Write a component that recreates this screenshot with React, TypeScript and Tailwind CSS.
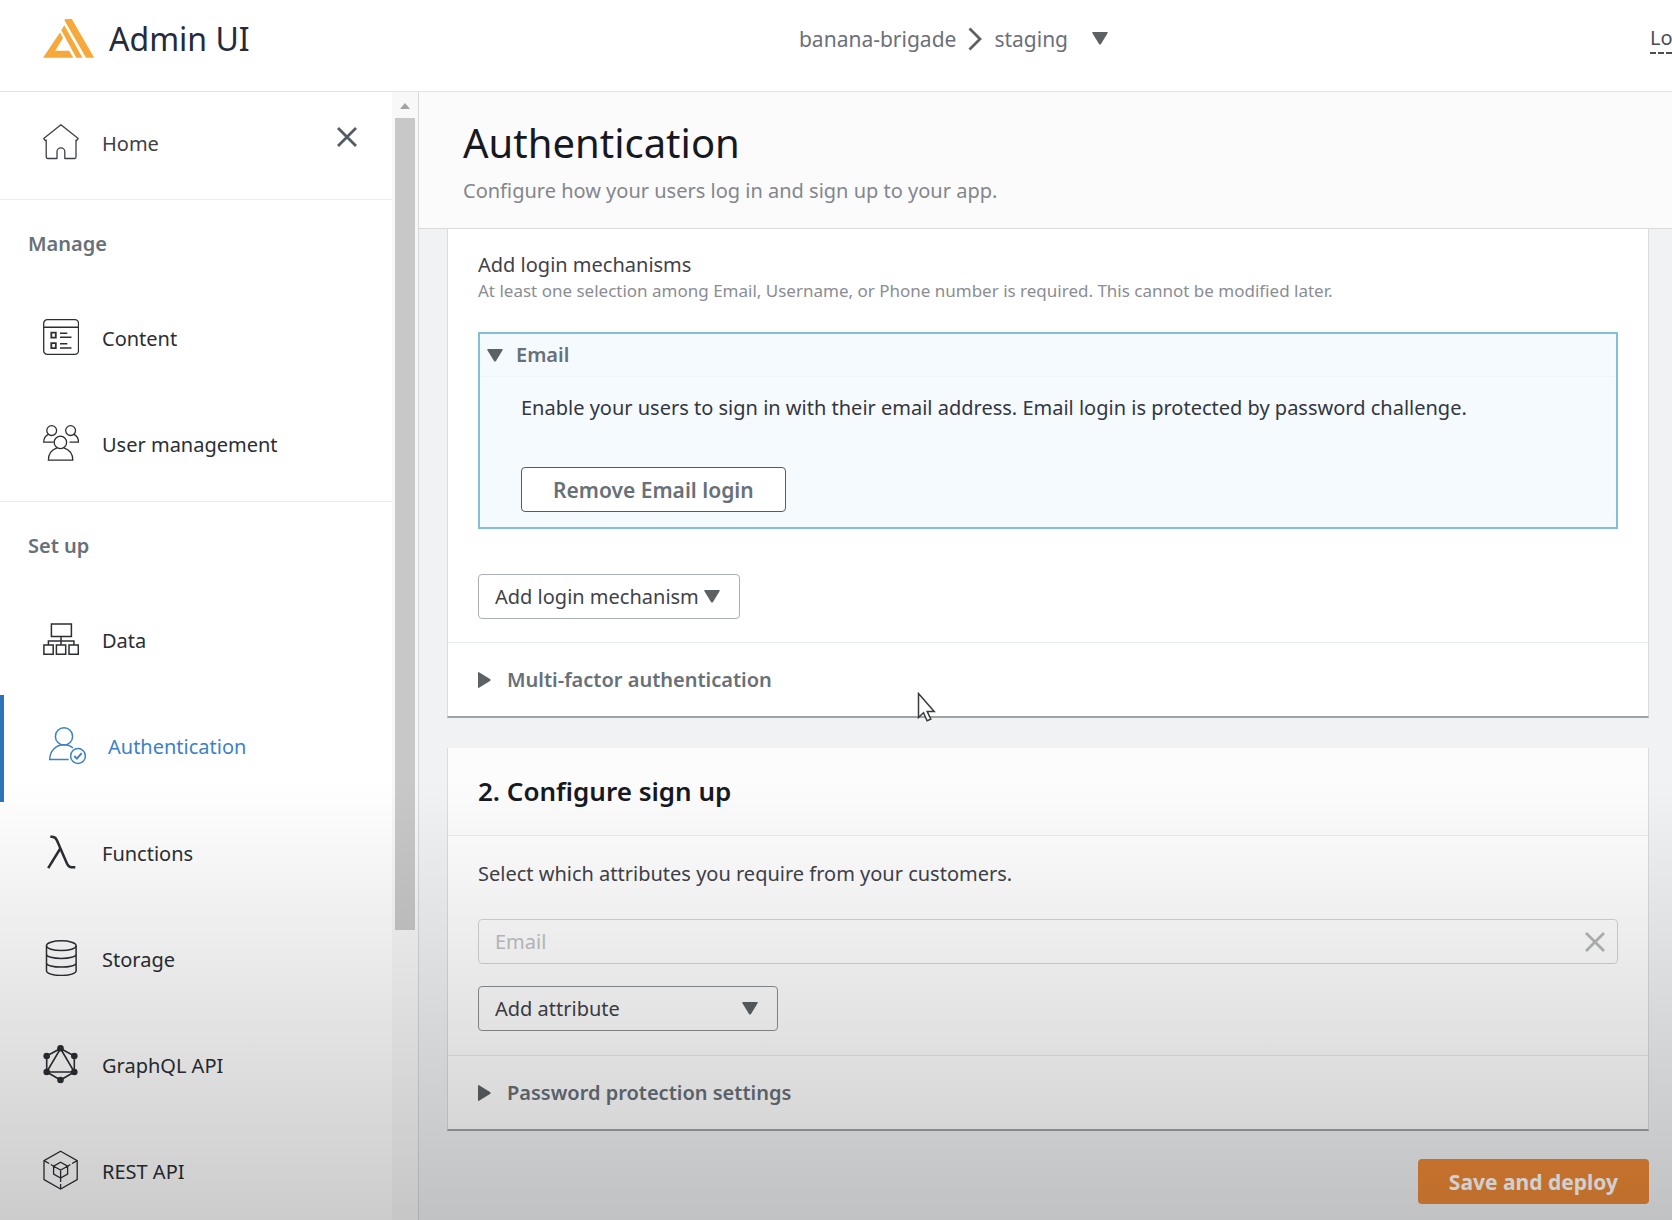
import type { ReactNode } from "react";

const iconProps = {
  viewBox: "0 0 36 36",
  className: "h-9 w-9 shrink-0",
  fill: "none",
  stroke: "currentColor",
  strokeWidth: 1.3,
  "aria-hidden": true,
} as const;

function HomeIcon() {
  return (
    <svg {...iconProps} strokeLinejoin="round">
      <path d="M.7 14.6 17.9.8 35.2 14.6l-1.6 1.9-.6-.4v17a1.4 1.4 0 0 1-1.4 1.4H21.8v-6.7a3.9 3.9 0 0 0-7.8 0v6.7H4.6a1.4 1.4 0 0 1-1.4-1.4v-17l-.9.5z" />
    </svg>
  );
}

function ContentIcon() {
  return (
    <svg {...iconProps}>
      <rect x=".7" y=".7" width="34.8" height="34.6" rx="3.6" />
      <path d="M.7 8.3h34.8M17 14.3h7.3M17 18.2h11.5M17 24.7h7.3M17 29h11.5" strokeWidth="1.5" />
      <path d="M8.3 13.7h4.5v5H8.3zM8.3 24.2h4.5v5H8.3z" strokeWidth="1.8" />
    </svg>
  );
}

function UsersIcon() {
  return (
    <svg {...iconProps}>
      <circle cx="8.7" cy="5.6" r="4.9" />
      <circle cx="27.6" cy="5.6" r="4.9" />
      <path d="M5.4 9.3C2.3 10.7.7 13.5.7 17.2h10M30.8 9.3c3.1 1.4 4.7 4.2 4.7 7.9h-9" />
      <circle cx="17.4" cy="17.4" r="6.2" />
      <path d="M14 22.9c-5.2 1.8-8.6 6.100-8.6 12.200h24.400c0-6.100-3.800-10.500-9-12.200" />
    </svg>
  );
}

function DataIcon() {
  return (
    <svg {...iconProps} strokeWidth="1.5">
      <path d="M8.4 3h20v12.400h-20zM.9 24h9.300v9.300H.9zM13.400 24h9.300v9.300h-9.300zM26 24h9.300v9.300H26zM5.400 24v-4h25.500v4M18 15.400V24" />
    </svg>
  );
}

function AuthIcon() {
  return (
    <svg {...iconProps} className="h-9 w-9 shrink-0 overflow-visible" strokeWidth="1.5">
      <circle cx="15" cy="8.4" r="8.6" />
      <path d="M24 20c-2.600-2.300-5.600-3.200-9-3.200C6.800 16.800.7 23.200.7 31.600h19" />
      <circle cx="29" cy="28" r="7.4" />
      <path d="m25.300 28 2.600 2.600 4.800-5.400" strokeWidth="2" />
    </svg>
  );
}

function LambdaIcon() {
  return (
    <svg {...iconProps} strokeWidth="2.5">
      <path d="M7.300 2.800h1.500c2.700 0 4 .8 5.200 3.600l9.600 22.400c1.300 3 2.500 4.500 5 4.500h3.700M17.300 14.500 5.200 34.200" />
    </svg>
  );
}

function StorageIcon() {
  return (
    <svg {...iconProps} strokeWidth="1.5">
      <ellipse cx="18.3" cy="5.7" rx="14.8" ry="4.9" />
      <path d="M3.500 5.700v25c0 2.700 6.600 4.800 14.800 4.800s14.800-2.100 14.800-4.800v-25M3.500 14.300c0 2.500 6.600 4.200 14.800 4.200s14.800-1.700 14.800-4.200M3.500 22.900c0 2.500 6.600 4.200 14.800 4.200s14.800-1.700 14.800-4.200" />
    </svg>
  );
}

function GraphqlIcon() {
  return (
    <svg {...iconProps} className="h-9 w-9 shrink-0 overflow-visible" strokeWidth="1.6">
      <path d="M17.500 2.500 31.300 10v16L17.500 34 3.700 26V10zM17.500 2.500 31.300 26H3.700z" />
      <g fill="currentColor" stroke="none">
        <circle cx="17.5" cy="2.2" r="3.3" />
        <circle cx="31.3" cy="10" r="3.3" />
        <circle cx="31.3" cy="26" r="3.3" />
        <circle cx="17.5" cy="34" r="3.3" />
        <circle cx="3.7" cy="26" r="3.3" />
        <circle cx="3.7" cy="10" r="3.3" />
      </g>
    </svg>
  );
}

function RestIcon() {
  return (
    <svg {...iconProps} className="h-9 w-9 shrink-0 overflow-visible">
      <path d="m17.600-.8 16.600 9.400v19L17.600 37 1 27.600v-19z" />
      <path d="m17.600 10.200 7 4v7.800l-7 4-7-4v-7.800zM10.600 14.200l7 3.900 7-3.900M17.600 18.100V26" />
      <path d="m1 8.600 5.200 2.900M7.800 12.500l2.800 1.700M34.200 8.600l-5.200 2.900M27.400 12.500l-2.800 1.700M17.600 37v-5M17.600 30v-4" />
    </svg>
  );
}

function Logo() {
  return (
    <svg viewBox="0 0 52 40" className="h-10 w-[52px] shrink-0" fill="#f6a83b" aria-hidden="true">
      <path d="M17 13.500 20 19 12.300 31.800H26.200L30.300 38.800H0z" />
      <path d="M18.300 11.200 21.300 6.200 39.500 38.800H33.300z" />
      <path d="M22.400 0h6.400l22.400 38.800h-8.200L21.500 1.500z" />
    </svg>
  );
}

function Cross({ className }: { className: string }) {
  return (
    <svg viewBox="0 0 20 20" className={className} fill="none" stroke="currentColor" strokeWidth="2.8" aria-hidden="true">
      <path d="m1 1 18 18M19 1 1 19" />
    </svg>
  );
}

function Down({ className = "" }: { className?: string }) {
  return (
    <svg viewBox="0 0 16 13" className={"h-[13px] w-4 shrink-0 " + className} fill="#5d6163" aria-hidden="true">
      <path d="M1 0h14q1.300 0 .7 1L9 12q-1 1.200-2 0L.3 1Q-.3 0 1 0" />
    </svg>
  );
}

function Right() {
  return (
    <svg viewBox="0 0 13 16" className="h-4 w-[13px] shrink-0" fill="#5d6163" aria-hidden="true">
      <path d="M0 1v14q0 1.300 1 .7L12 9q1.200-1 0-2L1 .3Q0-.3 0 1" />
    </svg>
  );
}

function NavItem({ icon, label, active = false }: { icon: ReactNode; label: string; active?: boolean }) {
  return (
    <a
      href="#"
      aria-current={active ? "page" : undefined}
      className={
        active
          ? "flex h-[107px] items-center gap-[23px] border-l-4 border-[#2e73b8] pb-1.5 pl-[45px] text-[#3d81c4]"
          : "flex h-[106px] items-center gap-[23px] pb-1.5 pl-[43px] text-[#2b2e33]"
      }
    >
      {icon}
      <span className="pt-[3px]">{label}</span>
    </a>
  );
}

function Sidebar() {
  return (
    <nav className="w-[392px] shrink-0 overflow-hidden bg-white">
      <div className="flex justify-between border-b border-[#ececec] pt-8 pr-[35px] pb-[39px]">
        <a href="#" className="flex items-center gap-[23px] pl-[43px] text-[#3d4046]">
          <HomeIcon />
          <span className="pt-[3px]">Home</span>
        </a>
        <button type="button" aria-label="Close navigation" className="h-[26px] text-[#545b64]">
          <Cross className="h-5 w-5" />
        </button>
      </div>
      <div className="border-b border-[#ececec] pb-0.5">
        <h2 className="px-7 pt-[30px] pb-[29px] leading-7 font-semibold text-[#687078]">Manage</h2>
        <NavItem icon={<ContentIcon />} label="Content" />
        <NavItem icon={<UsersIcon />} label="User management" />
      </div>
      <h2 className="px-7 pt-[30px] pb-[29px] leading-7 font-semibold text-[#687078]">Set up</h2>
      <NavItem icon={<DataIcon />} label="Data" />
      <NavItem icon={<AuthIcon />} label="Authentication" active />
      <NavItem icon={<LambdaIcon />} label="Functions" />
      <NavItem icon={<StorageIcon />} label="Storage" />
      <NavItem icon={<GraphqlIcon />} label="GraphQL API" />
      <NavItem icon={<RestIcon />} label="REST API" />
    </nav>
  );
}

function ScrollTrack() {
  return (
    <div className="flex w-[27px] shrink-0 flex-col border-r border-[#d5d9d9] bg-[#f8f8f8] pr-[3px] pl-[3px]">
      <svg viewBox="0 0 10 6" className="mx-auto mt-[11px] mb-[9px] h-1.5 w-2.5" fill="#a3a3a3" aria-hidden="true">
        <path d="M5 0l5 6H0z" />
      </svg>
      <div className="h-[72%] bg-[#c8c8c8]" />
    </div>
  );
}

const card = "border-x border-[#d9dcdd] border-b-2 border-b-[#9fa3a5] bg-white";

function LoginCard() {
  return (
    <section className={card}>
      <div className="px-[30px] pt-[22px] pb-[23px]">
        <h2 className="leading-7 text-[#3f4249]">Add login mechanisms</h2>
        <p className="text-[17px] leading-6 text-[#8a8d92]">
          At least one selection among Email, Username, or Phone number is required. This cannot be modified later.
        </p>
        <div className="mt-[29px] border-2 border-[#83c0d8] bg-[#f5faff]">
          <button
            type="button"
            aria-expanded="true"
            className="flex h-[43px] w-full items-center gap-[13px] border-b border-[#eff4f8] px-[7px] font-semibold text-[#687078]"
          >
            <Down />
            Email
          </button>
          <div className="px-[41px] pt-[17px] pb-[15px]">
            <p className="leading-7 text-[#33363d]">
              Enable your users to sign in with their email address. Email login is protected by password challenge.
            </p>
            <button
              type="button"
              className="mt-[45px] h-[45px] rounded-sm border border-[#545b64] bg-white px-[31px] text-[21px] font-semibold text-[#687078]"
            >
              Remove Email login
            </button>
          </div>
        </div>
        <div className="relative mt-[45px] w-[262px]">
          <select
            aria-label="Add login mechanism"
            className="block h-[45px] w-full appearance-none rounded-sm border border-[#aab0b5] bg-white pl-4 text-[#3f4249]"
          >
            <option>Add login mechanism</option>
          </select>
          <Down className="pointer-events-none absolute top-4 right-5" />
        </div>
      </div>
      <button
        type="button"
        aria-expanded="false"
        className="flex h-[74px] w-full items-center gap-4 border-t border-[#eaeded] px-[30px] font-semibold text-[#687078]"
      >
        <Right />
        Multi-factor authentication
      </button>
    </section>
  );
}

function SignUpCard() {
  return (
    <section className={card}>
      <h2 className="border-b border-[#eaeded] bg-[#fcfcfd] px-[30px] pt-[25px] pb-[26px] text-[26px] leading-9 font-semibold text-[#16191f]">
        2. Configure sign up
      </h2>
      <div className="px-[30px] pt-6 pb-6">
        <p className="leading-7 text-[#3f4249]">Select which attributes you require from your customers.</p>
        <div className="mt-[31px] flex h-[45px] items-center rounded-sm border border-[#d5d5d5] pr-3 pl-4 text-[#bfc1c3]">
          <input
            aria-label="Required attribute"
            value="Email"
            readOnly
            className="min-w-0 flex-1 bg-transparent outline-none"
          />
          <button type="button" aria-label="Remove Email" className="text-[#b5b7b8]">
            <Cross className="h-5 w-5" />
          </button>
        </div>
        <div className="relative mt-[22px] w-[300px]">
          <select
            aria-label="Add attribute"
            className="block h-[45px] w-full appearance-none rounded-sm border border-[#8b9095] bg-transparent pl-4 text-[#3f4249]"
          >
            <option>Add attribute</option>
          </select>
          <Down className="pointer-events-none absolute top-4 right-5" />
        </div>
      </div>
      <button
        type="button"
        aria-expanded="false"
        className="flex h-[74px] w-full items-center gap-4 border-t border-[#eaeded] px-[30px] font-semibold text-[#687078]"
      >
        <Right />
        Password protection settings
      </button>
    </section>
  );
}

export default function App() {
  return (
    <div className="relative flex h-screen flex-col overflow-hidden bg-white font-['Noto_Sans',sans-serif] text-[20px] leading-7">
      <header className="flex h-[92px] shrink-0 items-center justify-between border-b border-[#e4e4e4] pb-[14px] pl-[43px]">
        <div className="flex flex-[4] items-center gap-[14px]">
          <Logo />
          <span className="text-[32px] leading-10 text-[#252b3a]">Admin UI</span>
        </div>
        <button type="button" className="flex items-center pl-1 text-[21px] text-[#6b7078]">
          <span>banana-brigade</span>
          <svg viewBox="0 0 14 24" className="mx-3 h-6 w-3.5" fill="none" stroke="#5d6163" strokeWidth="2.8" aria-hidden="true">
            <path d="m1.500 1.500 10.500 10.500L1.500 22.500" />
          </svg>
          <span>staging</span>
          <Down className="ml-6" />
        </button>
        <div className="flex flex-[3] justify-end">
          <a href="#" className="w-[22px] overflow-hidden border-b-2 border-dashed border-[#4a4d52] whitespace-nowrap text-[#4a4d52]">
            Log out
          </a>
        </div>
      </header>

      <div className="flex min-h-0 flex-1">
        <Sidebar />
        <ScrollTrack />
        <main className="flex min-w-0 flex-1 flex-col bg-[#f0f2f4]">
          <div className="border-b border-[#d9dbdd] bg-[#fbfbfb] px-11 pt-[25px] pb-[23px]">
            <h1 className="text-[40px] leading-[52px] text-[#16191f]">Authentication</h1>
            <p className="pt-2 leading-7 text-[#83868c]">Configure how your users log in and sign up to your app.</p>
          </div>
          <div className="flex flex-col pr-[23px] pl-7">
            <LoginCard />
            <div className="pt-[30px]">
              <SignUpCard />
            </div>
            <button
              type="button"
              className="mt-7 h-[45px] self-end rounded-sm bg-[#ed8936] px-[31px] text-[21px] font-bold text-white"
            >
              Save and deploy
            </button>
          </div>
        </main>
      </div>

      <div className="pointer-events-none absolute inset-x-0 bottom-0 h-[440px] bg-linear-to-b from-transparent to-black/20" />
      <svg
        viewBox="0 0 20 32"
        className="pointer-events-none absolute top-[692px] left-[917px] h-8 w-5"
        fill="#fff"
        stroke="#3a3a3a"
        strokeWidth="1.5"
        aria-hidden="true"
      >
        <path d="M1.500 1.500v24l5-4.700 3.600 8 3.700-1.700-3.600-7.700h7z" />
      </svg>
    </div>
  );
}
